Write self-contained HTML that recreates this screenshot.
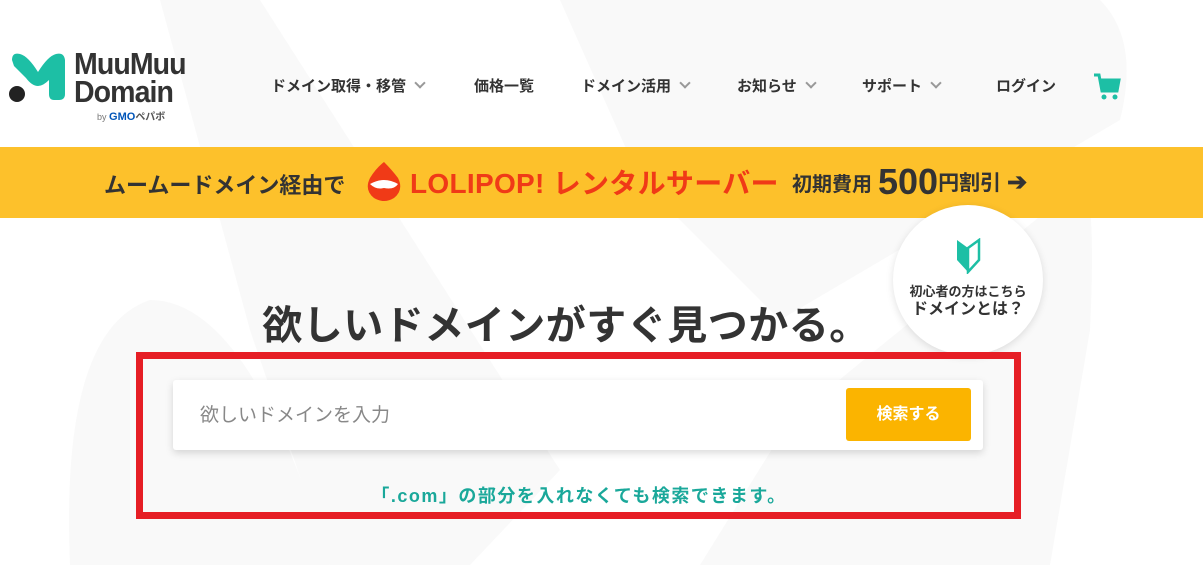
<!DOCTYPE html>
<html><head><meta charset="utf-8"><style>
*{margin:0;padding:0;box-sizing:border-box}
body{width:1203px;height:565px;overflow:hidden;background:#fff;font-family:"Liberation Sans","Noto Sans CJK JP",sans-serif;position:relative;color:#333}
.abs{position:absolute}
.nav{top:75px;font-size:15px;font-weight:bold;color:#333;white-space:nowrap}
.chev{display:inline-block;width:8px;height:8px;border-right:2px solid #999;border-bottom:2px solid #999;transform:rotate(45deg);margin-left:10px;position:relative;top:-4px}
</style></head><body>
<svg class="abs" style="left:0;top:0" width="1203" height="565">
<path d="M160 0 L260 0 L560 470 L470 565 L330 565 L250 330 Z" fill="#f9f9f9"/>
<path d="M560 0 L1100 0 Q1140 40 1120 120 L780 320 L640 180 Z" fill="#f9f9f9"/>
<path d="M1060 200 Q1100 120 1090 330 L1050 565 L700 565 L790 420 Z" fill="#f9f9f9"/>
<path d="M70 565 Q60 330 150 300 Q250 300 330 565 Z" fill="#f9f9f9"/>
</svg>
<!-- logo -->
<svg class="abs" style="left:8px;top:52px" width="60" height="52" viewBox="0 0 60 52">
<path d="M4 8 Q4 0 12 2 Q20 4 30 20 Q40 4 48 2 Q56 0 57 8 L57 42 Q57 48 51 48 L46 48 Q41 48 41 42 L41 28 Q35 34 30 34 Q24 34 18 26 L6 14 Z" fill="#1dbfa5"/>
<circle cx="9" cy="42" r="8" fill="#222"/>
</svg>
<div class="abs" style="left:74px;top:50px;font-size:31px;font-weight:bold;line-height:28px;color:#333;letter-spacing:-1px;transform:scaleX(0.92);transform-origin:left">MuuMuu<br>Domain</div>
<div class="abs" style="left:97px;top:108px;font-size:9px;color:#777"><span>by</span> <b style="color:#0055b8;font-size:11px">GMO</b><b style="font-size:10px;color:#555">ペパボ</b></div>
<div class="abs nav" style="left:271px">ドメイン取得・移管<span class="chev"></span></div>
<div class="abs nav" style="left:474px">価格一覧</div>
<div class="abs nav" style="left:581px">ドメイン活用<span class="chev"></span></div>
<div class="abs nav" style="left:737px">お知らせ<span class="chev"></span></div>
<div class="abs nav" style="left:862px">サポート<span class="chev"></span></div>
<div class="abs nav" style="left:996px">ログイン</div>
<svg class="abs" style="left:1093px;top:72px" width="28" height="30" viewBox="0 0 28 30">
<path d="M1 3 L6 3 L9 19 L24 19 L26 8 L8 8" fill="none" stroke="#1dbfa5" stroke-width="3"/>
<rect x="8" y="9" width="17" height="9" fill="#1dbfa5"/>
<circle cx="11" cy="25" r="2.5" fill="#1dbfa5"/><circle cx="22" cy="25" r="2.5" fill="#1dbfa5"/>
</svg>
<!-- banner -->
<div class="abs" style="left:0;top:147px;width:1203px;height:71px;background:#fdc12b"></div>
<div class="abs" style="left:104px;top:168px;font-size:22px;font-weight:bold;color:#333;white-space:nowrap">ムームードメイン経由で</div>
<svg class="abs" style="left:364px;top:160px" width="40" height="42" viewBox="0 0 40 42">
<path d="M20 2 Q28 10 34 18 Q40 30 30 38 Q20 44 10 38 Q0 30 6 18 Q12 8 20 2Z" fill="#f03a17"/>
<path d="M6 24 Q20 16 34 24 Q30 30 20 28 Q12 30 6 24Z" fill="#fff"/>
</svg>
<div class="abs" style="left:410px;top:162px;font-size:28px;font-weight:bold;color:#f03a17;white-space:nowrap;letter-spacing:0.3px">LOLIPOP! レンタルサーバー</div>
<div class="abs" style="left:792px;top:160px;height:44px;display:flex;align-items:center;font-weight:bold;color:#333;white-space:nowrap;gap:6px">
<span style="font-size:20px">初期費用</span><span style="font-size:36px;line-height:36px">500</span><span style="font-size:21px;margin-left:-6px">円割引</span><span style="font-size:24px">➔</span></div>
<!-- circle -->
<div class="abs" style="left:893px;top:205px;width:150px;height:150px;border-radius:50%;background:#fff;box-shadow:0 2px 8px rgba(0,0,0,.12)"></div>
<svg class="abs" style="left:955px;top:238px" width="26" height="36" viewBox="0 0 26 36">
<path d="M2 2 L13 10 L13 34 L2 22 Z" fill="#1dbfa5"/><path d="M24 2 L13 10 L13 34 L24 22 Z" fill="none" stroke="#1dbfa5" stroke-width="2.5"/>
</svg>
<div class="abs" style="left:893px;top:283px;width:150px;text-align:center;font-size:13px;color:#333;font-weight:bold;line-height:18px">初心者の方はこちら<br><span style="font-size:16px">ドメインとは？</span></div>
<!-- title -->
<div class="abs" style="left:0;top:293px;width:1132px;text-align:center;font-size:40px;font-weight:bold;color:#333;letter-spacing:0.5px">欲しいドメインがすぐ見つかる。</div>
<!-- red box -->
<div class="abs" style="left:136px;top:352px;width:885px;height:167px;border:7px solid #e61e25"></div>
<div class="abs" style="left:173px;top:380px;width:810px;height:70px;background:#fff;border-radius:3px;box-shadow:0 3px 8px rgba(0,0,0,.15)"></div>
<div class="abs" style="left:200px;top:400px;font-size:19px;color:#888">欲しいドメインを入力</div>
<div class="abs" style="left:846px;top:388px;width:125px;height:53px;background:#fbb400;border-radius:3px;color:#fff;font-weight:bold;font-size:16px;text-align:center;line-height:53px">検索する</div>
<div class="abs" style="left:137px;top:482px;width:884px;text-align:center;font-size:18px;font-weight:bold;color:#1aa89a;letter-spacing:1.5px">「.com」の部分を入れなくても検索できます。</div>
</body></html>
